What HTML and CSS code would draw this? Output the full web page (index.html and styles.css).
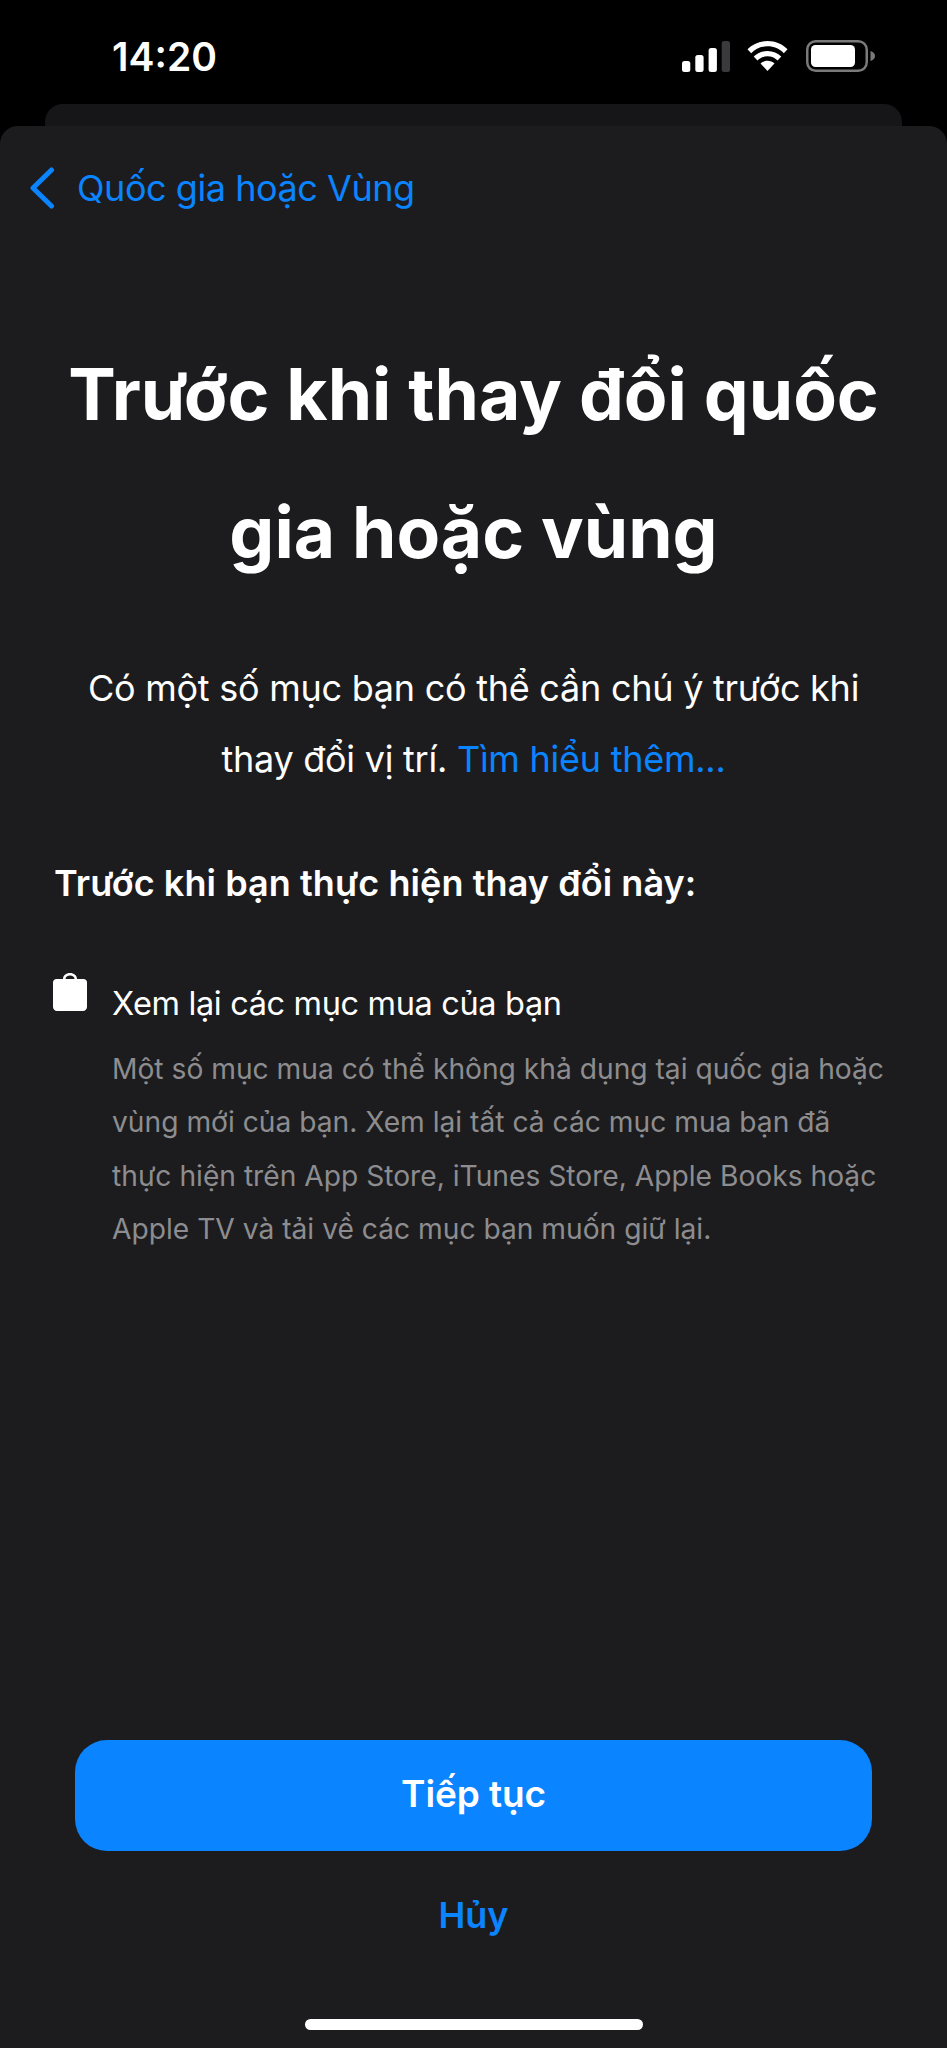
FILE: index.html
```html
<!DOCTYPE html>
<html lang="vi">
<head>
<meta charset="utf-8">
<title>Trước khi thay đổi quốc gia hoặc vùng</title>
<link rel="stylesheet" href="styles.css">
</head>
<body>
<div class="phone">
  <header class="status">
    <span class="time">14:20</span>
    <div class="status-icons">
      <svg class="signal" viewBox="0 0 48 31" width="48" height="31"><rect x="0" y="20" width="8.300" height="11" rx="2.500" fill="#fff"/><rect x="13.300" y="14" width="8.300" height="17" rx="2.500" fill="#fff"/><rect x="26.600" y="7" width="8.300" height="24" rx="2.500" fill="#fff"/><rect x="39.700" y="0" width="8.300" height="31" rx="2.500" fill="#3a3a3c"/></svg>
      <svg class="wifi" viewBox="0 0 44 32" width="41" height="30"><path d="M22 0C13.500 0 6 3.300 0.500 8.800l4 4.200C9 8.300 15.200 5.600 22 5.600s13 2.700 17.500 7.400l4-4.200C38 3.300 30.500 0 22 0z" fill="#fff"/><path d="M22 10.500c-5.800 0-11 2.300-14.800 6l4 4.200c2.800-2.700 6.600-4.400 10.800-4.400s8 1.700 10.800 4.400l4-4.200c-3.800-3.700-9-6-14.800-6z" fill="#fff"/><path d="M22 21c-2.900 0-5.500 1.100-7.500 3L22 32l7.500-8c-2-1.900-4.600-3-7.500-3z" fill="#fff"/></svg>
      <svg class="battery" viewBox="0 0 69 32" width="69" height="32"><rect x="1.250" y="1.250" width="59.500" height="29.500" rx="8.500" fill="none" stroke="#7a7a7c" stroke-width="2.500"/><rect x="5" y="5" width="44" height="22" rx="4.500" fill="#fff"/><path d="M64.500 11c2.700.8 4.500 2.700 4.500 5s-1.800 4.200-4.500 5z" fill="#7a7a7c"/></svg>
    </div>
  </header>
  <div class="back-card"></div>
  <main class="sheet">
    <nav class="nav">
      <svg class="chevron" viewBox="0 0 26 42" width="26" height="42"><path d="M22.500 3 L4 21 L22.500 39" fill="none" stroke="#0a84ff" stroke-width="5" stroke-linecap="round" stroke-linejoin="round"/></svg>
      <span class="nav-label">Quốc gia hoặc Vùng</span>
    </nav>
    <h1 class="title">Trước khi thay đổi quốc<br>gia hoặc vùng</h1>
    <p class="intro">Có một số mục bạn có thể cần chú ý trước khi<br>thay đổi vị trí. <a class="link">Tìm hiểu thêm...</a></p>
    <h2 class="subhead">Trước khi bạn thực hiện thay đổi này:</h2>
    <section class="item">
      <svg class="bag" viewBox="0 0 34 38" width="34" height="38"><path d="M3.500 6H10C10 2.500 13 0 17 0s7 2.500 7 6h6.500C32.500 6 34 7.500 34 9.500V34c0 2.200-1.800 4-4 4H4c-2.200 0-4-1.800-4-4V9.500C0 7.500 1.500 6 3.500 6zM12.500 6h9c0-2-2-3.500-4.500-3.500S12.500 4 12.500 6z" fill="#fff" fill-rule="evenodd"/></svg>
      <div class="item-text">
        <h3 class="item-title">Xem lại các mục mua của bạn</h3>
        <p class="item-body">Một số mục mua có thể không khả dụng tại quốc gia hoặc<br>vùng mới của bạn. Xem lại tất cả các mục mua bạn đã<br>thực hiện trên App Store, iTunes Store, Apple Books hoặc<br>Apple TV và tải về các mục bạn muốn giữ lại.</p>
      </div>
    </section>
    <footer class="actions">
      <button class="primary">Tiếp tục</button>
      <button class="cancel">Hủy</button>
      <div class="home-bar"></div>
    </footer>
  </main>
</div>
</body>
</html>
```

FILE: styles.css
```css
* { box-sizing: border-box; }
html, body { margin: 0; padding: 0; background: #000; }
body { font-family: "Inter", "Liberation Sans", sans-serif; color: #fff; }
.phone { width: 947px; height: 2048px; display: flex; flex-direction: column; overflow: hidden; }
.status { height: 104px; padding: 38px 0 0 112px; display: flex; justify-content: space-between; align-items: flex-start; flex: none; }
.time { font-size: 39px; font-weight: 600; line-height: 38px; }
.status-icons { display: flex; align-items: center; gap: 17px; padding: 2px 72px 0 0; }
.wifi { margin-right: 1px; }
.back-card { height: 22px; margin: 0 45px; background: #161618; border-radius: 18px 18px 0 0; flex: none; }
.sheet { flex: 1; background: #1c1c1e; border-radius: 18px 18px 0 0; display: flex; flex-direction: column; }
.nav { height: 62px; margin: 31px 0 0 29px; display: flex; align-items: center; gap: 22px; color: #0a84ff; flex: none; }
.nav-label { font-size: 36px; letter-spacing: -0.45px; }
.title { margin: 106px 0 0; text-align: center; font-size: 71.300px; line-height: 138px; font-weight: 700; }
.intro { margin: 52px 0 0; text-align: center; font-size: 36px; line-height: 71px; letter-spacing: -0.25px; }
.link { color: #0a84ff; }
.subhead { margin: 63px 0 0 54px; font-size: 36px; line-height: 50px; font-weight: 600; letter-spacing: 0.07px; }
.item { margin: 71px 0 0 53px; display: flex; gap: 25px; align-items: flex-start; }
.bag { margin-top: -6px; flex: none; }
.item-title { margin: 0; font-size: 32.500px; line-height: 50px; font-weight: 400; letter-spacing: -0.35px; }
.item-body { margin: 13.500px 0 0; font-size: 28.200px; line-height: 53.500px; color: #8d8d90; white-space: nowrap; }
.actions { margin-top: auto; padding: 0 75px 18px 75px; display: flex; flex-direction: column; align-items: center; }
.primary { width: 797px; height: 111px; padding: 0 0 4px; border: 0; border-radius: 32px; background: #0a84ff; color: #fff; font: 600 37px "Inter", "Liberation Sans", sans-serif; letter-spacing: -0.1px; }
.cancel { margin-top: 33px; height: 62px; border: 0; padding: 0; background: none; color: #0a84ff; font: 600 36px "Inter", "Liberation Sans", sans-serif; }
.home-bar { margin-top: 73px; width: 338px; height: 11px; border-radius: 6px; background: #fff; }
```
